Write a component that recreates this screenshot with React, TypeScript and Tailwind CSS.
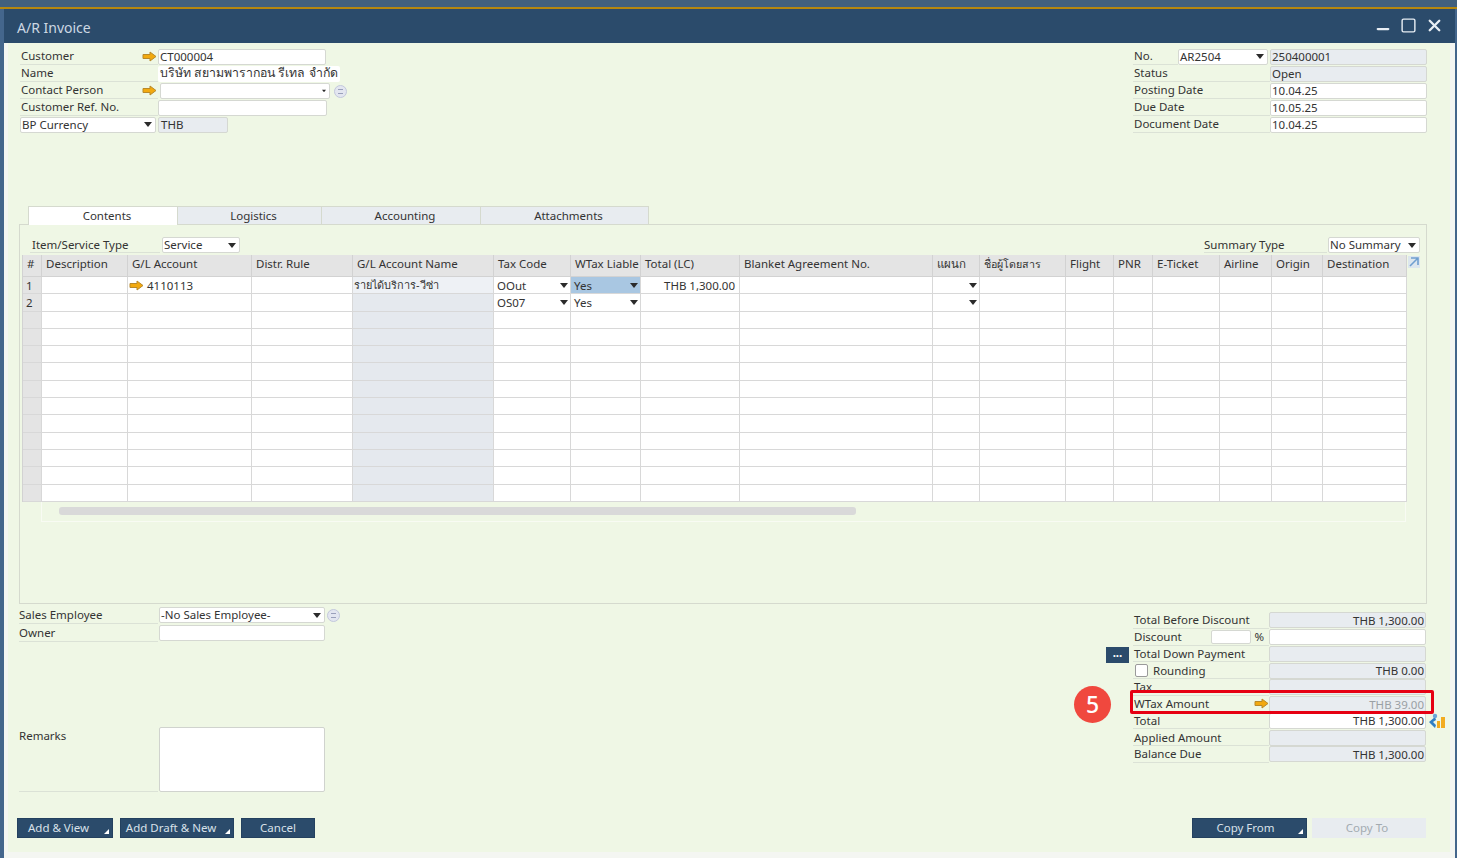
import { Minus, Square, X } from "lucide-react";
import { ReactNode } from "react";

const Arrow = () => (
  <svg width="15" height="11" viewBox="0 0 15 11" className="shrink-0">
    <path
      d="M1 3.5h7V1l6 4.5L8 10V7.5H1z"
      fill="#f2a90f"
      stroke="#b8892a"
      strokeWidth="1"
    />
  </svg>
);

const Caret = ({ small = false }: { small?: boolean }) => (
  <svg
    width={small ? 4 : 8}
    height={small ? 4 : 5}
    viewBox="0 0 8 5"
    className="shrink-0"
  >
    <path d="M0 0h8L4 5z" fill="#2b2b2b" />
  </svg>
);

const InfoDot = ({ className = "" }: { className?: string }) => (
  <span
    className={`flex h-[13px] w-[13px] items-center justify-center rounded-full border border-[#c3c8dc] bg-[#e3e6f0] ${className}`}
  >
    <span className="h-[5px] w-[5px] border-y border-[#9aa0bb]" />
  </span>
);

const Input = ({
  className = "",
  children,
}: {
  className?: string;
  children?: ReactNode;
}) => (
  <div
    className={`flex h-[16px] items-center overflow-hidden whitespace-nowrap rounded-[2px] border border-[#d5d8d2] px-[1px] ${className}`}
  >
    {children}
  </div>
);

const Select = ({
  text,
  className = "",
  small = false,
}: {
  text: string;
  className?: string;
  small?: boolean;
}) => (
  <Input className={`justify-between bg-white pr-[3px] ${className}`}>
    <span>{text}</span>
    <Caret small={small} />
  </Input>
);

const Label = ({
  text,
  className = "",
  pad = "pl-[2px]",
  children,
}: {
  text: string;
  className?: string;
  pad?: string;
  children?: ReactNode;
}) => (
  <div
    className={`flex h-full shrink-0 items-center justify-between border-b border-[#dbe2d6] ${pad} ${className}`}
  >
    <span>{text}</span>
    {children}
  </div>
);

const columns = [
  "#",
  "Description",
  "G/L Account",
  "Distr. Rule",
  "G/L Account Name",
  "Tax Code",
  "WTax Liable",
  "Total (LC)",
  "Blanket Agreement No.",
  "แผนก",
  "ชื่อผู้โดยสาร",
  "Flight",
  "PNR",
  "E-Ticket",
  "Airline",
  "Origin",
  "Destination",
];

const rowCells = (i: number): ReactNode[] => {
  const cells: ReactNode[] = columns.map(() => null);
  cells[0] = i === 0 ? "1" : i === 1 ? "2" : null;
  if (i === 0) {
    cells[2] = (
      <span className="-ml-[2px] flex items-center gap-[3px]">
        <Arrow />
        4110113
      </span>
    );
    cells[4] = <span className="-ml-[2px] text-[10.9px]">รายได้บริการ-วีซ่า</span>;
    cells[7] = <span className="ml-auto pr-[4px]">THB 1,300.00</span>;
  }
  if (i < 2) {
    cells[5] = (
      <span className="flex w-full items-center justify-between pr-[2px]">
        {i === 0 ? "OOut" : "OS07"}
        <Caret />
      </span>
    );
    cells[6] = (
      <span className="flex w-full items-center justify-between pr-[2px]">
        Yes
        <Caret />
      </span>
    );
    cells[9] = (
      <span className="flex w-full justify-end pr-[2px]">
        <Caret />
      </span>
    );
  }
  return cells;
};

const cellBg = (col: number, row: number) => {
  if (col === 0) return "bg-[#e4e4e4]";
  if (col === 4) return row === 0 ? "bg-[#eef1f5]" : "bg-[#e5e9ee]";
  if (col === 6 && row === 0) return "bg-[#a9c7e2]";
  return "bg-white";
};

const LinesGrid = () => (
  <div className="grid w-[1384px] grid-cols-[19px_86px_124px_101px_141px_77px_70px_99px_193px_47px_86px_48px_39px_67px_52px_51px_84px] border-l border-[#d2d2d2]">
    {columns.map((name) => (
      <div
        key={name}
        className={`flex h-[22px] items-center overflow-hidden whitespace-nowrap border-r border-b border-[#d2d2d2] bg-[#e4e4e4] pl-[4px] pb-[3px] ${name === "ชื่อผู้โดยสาร" ? "text-[10.7px]" : ""}`}
      >
        {name}
      </div>
    ))}
    {Array.from({ length: 13 }).map((_, r) =>
      rowCells(r).map((cell, c) => (
        <div
          key={`${r}-${c}`}
          className={`flex h-[17.3px] items-center overflow-hidden whitespace-nowrap border-r border-b border-[#d8d8d8] pl-[3px] ${cellBg(c, r)}`}
        >
          {cell}
        </div>
      )),
    )}
  </div>
);

const totals = [
  { label: "Total Before Discount", value: "THB 1,300.00" },
  { label: "Discount", value: "", white: true, pct: true },
  { label: "Total Down Payment", value: "", more: true },
  { label: "Rounding", value: "THB 0.00", check: true },
  { label: "Tax", value: "" },
  { label: "WTax Amount", value: "THB 39.00", arrow: true, muted: true },
  { label: "Total", value: "THB 1,300.00", white: true, badge: true },
  { label: "Applied Amount", value: "" },
  { label: "Balance Due", value: "THB 1,300.00" },
];

const Totals = () => (
  <div className="mt-[8px] w-[293px]">
    {totals.map((t) => (
      <div key={t.label} className="relative flex h-[16.75px] items-center">
        {t.more && (
          <div className="absolute left-[-27px] top-[1px] flex h-[16px] w-[23px] items-center justify-center bg-[#2b4b6b] pb-[4px] font-bold leading-none text-white">
            ...
          </div>
        )}
        <Label text={t.check ? "" : t.label} pad="pl-[1px]" className="w-[136px]">
          {t.check && (
            <span className="mr-auto flex items-center gap-[5px] pl-[1px]">
              <span className="h-[13px] w-[13px] rounded-[2px] border border-[#9a9a9a] bg-white" />
              {t.label}
            </span>
          )}
          {t.arrow && <Arrow />}
          {t.pct && (
            <span className="flex items-center gap-[3px] pr-[5px]">
              <span className="h-[14px] w-[40px] rounded-[2px] border border-[#d5d8d2] bg-white" />%
            </span>
          )}
        </Label>
        <Input
          className={`w-[157px] justify-end ${t.white ? "bg-white" : "bg-[#e8ecf0]"} ${t.muted ? "text-[#9aa0a4]" : ""}`}
        >
          {t.value}
        </Input>
        {t.badge && (
          <svg
            width="18"
            height="16"
            viewBox="0 0 18 16"
            className="absolute left-[295px] top-[0px]"
          >
            <path d="M1 9l6-5 1 3-3 2 3 3-1 3z" fill="#2f7fc4" />
            <circle cx="7" cy="3" r="2.2" fill="#6aa5d8" />
            <path d="M9 8h3v7H9zM13 4h4v11h-4z" fill="#f2ac1f" />
          </svg>
        )}
      </div>
    ))}
  </div>
);

const FootButton = ({
  text,
  className = "",
  corner = false,
}: {
  text: string;
  className?: string;
  corner?: boolean;
}) => (
  <div
    className={`relative flex h-[20px] items-center justify-center border border-[#24415f] bg-[#2b4b6b] text-[#d9e1e9] ${className}`}
  >
    {text}
    {corner && (
      <span className="absolute right-[3px] bottom-[3px] h-0 w-0 border-b-[5px] border-l-[5px] border-b-white border-l-transparent" />
    )}
  </div>
);

export default function App() {
  return (
    <div className="relative flex h-[858px] w-[1457px] flex-col overflow-hidden bg-[#44668c] font-['Noto_Sans','Liberation_Sans',sans-serif] text-[11.5px] text-[#333]">
      <div className="h-[7px] bg-[#41607e]" />
      <div className="h-[2px] bg-[#b5870f]" />

      <div className="ml-[4px] mr-[2px] flex flex-1 flex-col bg-[#f4f6f2]">
        <div className="flex h-[34px] items-center justify-between bg-[#2b4b6b] pl-[13px] pr-[11px] text-white">
          <span className="pt-[2px] text-[14px] text-[#cdd8e3]">A/R Invoice</span>
          <div className="flex -translate-y-[1px] items-center gap-[8px] text-[#e8eef4]">
            <Minus size={18} strokeWidth={3} className="translate-y-[4px]" />
            <Square size={17} strokeWidth={2} />
            <X size={19} strokeWidth={3} />
          </div>
        </div>

        <div className="ml-[4px] mr-[5px] mb-[6px] flex flex-1 flex-col bg-[#eff7e5]">
          {/* header fields */}
          <div className="flex h-[163px] justify-between pl-[12px] pr-[23px] pt-[5px]">
            <div>
              <div className="flex h-[17px] items-center">
                <Label text="Customer" pad="pl-[1px]" className="w-[138px] pr-[1px]">
                  <Arrow />
                </Label>
                <Input className="w-[168px] bg-white">CT000004</Input>
              </div>
              <div className="flex h-[17px] items-center">
                <Label text="Name" pad="pl-[1px]" className="w-[138px]" />
                <Input className="w-[182px] border-0 bg-white pl-[2px] text-[12.3px]">
                  บริษัท สยามพารากอน รีเทล จำกัด
                </Input>
              </div>
              <div className="flex h-[17px] items-center">
                <Label text="Contact Person" pad="pl-[1px]" className="w-[138px] pr-[1px]">
                  <Arrow />
                </Label>
                <Select text="" small className="ml-[2px] w-[170px]" />
                <InfoDot className="ml-[4px] translate-y-[1px]" />
              </div>
              <div className="flex h-[17px] items-center">
                <Label text="Customer Ref. No." pad="pl-[1px]" className="w-[138px]" />
                <Input className="w-[169px] bg-white" />
              </div>
              <div className="flex h-[17px] items-center">
                <Select text="BP Currency" className="w-[136px]" />
                <Input className="ml-[2px] w-[70px] bg-[#e8ecf0] pl-[2px]">THB</Input>
              </div>
            </div>

            <div className="w-[294px]">
              <div className="flex h-[17px] items-center">
                <Label text="No." pad="pl-[1px]" className="w-[45px]" />
                <Select text="AR2504" className="w-[90px]" />
                <Input className="ml-[2px] w-[157px] bg-[#e8ecf0]">250400001</Input>
              </div>
              {[
                { label: "Status", value: "Open", bg: "bg-[#e8ecf0]" },
                { label: "Posting Date", value: "10.04.25", bg: "bg-white" },
                { label: "Due Date", value: "10.05.25", bg: "bg-white" },
                { label: "Document Date", value: "10.04.25", bg: "bg-white" },
              ].map((f) => (
                <div key={f.label} className="flex h-[17px] items-center">
                  <Label text={f.label} pad="pl-[1px]" className="w-[137px]" />
                  <Input className={`w-[157px] ${f.bg}`}>{f.value}</Input>
                </div>
              ))}
            </div>
          </div>

          {/* tabs and contents */}
          <div className="ml-[11px] w-[1408px]">
            <div className="relative z-10 -mb-px flex h-[19px] pl-[9px]">
              <div className="flex w-[150px] items-center justify-center border-x border-t border-[#d5dace] bg-white pl-[8px]">
                Contents
              </div>
              {[
                { name: "Logistics", w: "w-[144px]" },
                { name: "Accounting", w: "w-[159px]" },
                { name: "Attachments", w: "w-[168px]" },
              ].map((t) => (
                <div
                  key={t.name}
                  className={`flex items-center justify-center border-r border-t border-b border-[#d5dace] bg-[#e8ecf0] pl-[8px] ${t.w}`}
                >
                  {t.name}
                </div>
              ))}
            </div>
            <div className="h-[380px] border border-[#d5dace] pl-[2px] pt-[12px]">
              <div className="flex h-[16px] items-center justify-between pr-[6px]">
                <div className="flex h-full items-center">
                  <Label text="Item/Service Type" className="ml-[8px] w-[130px]" pad="pl-[2px]" />
                  <Select text="Service" className="ml-[2px] w-[78px]" />
                </div>
                <div className="flex h-full items-center">
                  <Label text="Summary Type" pad="pl-0" className="w-[123px]" />
                  <Select text="No Summary" className="ml-[1px] w-[92px]" />
                </div>
              </div>
              <div className="relative mt-[2px]">
                <LinesGrid />
                <svg
                  width="12"
                  height="12"
                  viewBox="0 0 12 12"
                  className="absolute left-[1386px] top-[1px]"
                >
                  <path d="M0 0h12v12H0z" fill="#dce6ee" />
                  <path d="M3 2h7v7M10 2L2 10" fill="none" stroke="#6f9fd0" strokeWidth="1.6" />
                </svg>
              </div>
              <div className="ml-[19px] h-[20px] w-[1365px] border-b border-x border-[#f8fbf3] pl-[17px] pt-[5px]">
                <div className="h-[8px] w-[797px] rounded-[3px] bg-[#d9d9d9]" />
              </div>
            </div>
          </div>

          {/* bottom fields */}
          <div className="flex h-[214px] justify-between pl-[11px] pr-[24px]">
            <div className="pt-[2px]">
              <div className="flex h-[18px] items-center">
                <Label text="Sales Employee" pad="pl-0" className="w-[139px]" />
                <Select text="-No Sales Employee-" className="ml-[1px] w-[166px]" />
                <InfoDot className="ml-[2px]" />
              </div>
              <div className="flex h-[18px] items-center">
                <Label text="Owner" pad="pl-0" className="w-[139px]" />
                <Input className="ml-[1px] w-[166px] bg-white" />
              </div>
              <div className="mt-[85px] flex h-[65px] items-stretch">
                <div className="w-[139px] border-b border-[#dbe2d6]">Remarks</div>
                <div className="ml-[1px] w-[166px] rounded-[2px] border border-[#d0d3ce] bg-white" />
              </div>
            </div>
            <Totals />
          </div>

          <div className="flex justify-between pl-[9px] pr-[24px]">
            <div className="flex gap-[7px]">
              <FootButton text="Add & View" corner className="w-[96px] pr-[13px]" />
              <FootButton text="Add Draft & New" corner className="w-[114px] pr-[12px]" />
              <FootButton text="Cancel" className="w-[74px]" />
            </div>
            <div className="flex gap-[5px]">
              <FootButton text="Copy From" corner className="w-[115px] pr-[8px]" />
              <div className="flex h-[20px] w-[114px] items-center justify-center bg-[#e8ecf0] pr-[4px] text-[#a3abb1]">
                Copy To
              </div>
            </div>
          </div>
        </div>
      </div>

      {/* callout */}
      <div className="absolute left-[1130px] top-[690px] h-[24px] w-[304px] rounded-[2px] border-[3px] border-[#e60012]" />
      <div className="absolute left-[1074px] top-[686px] flex h-[37px] w-[37px] items-center justify-center rounded-full bg-[#f0483e] text-[23px] font-medium text-white">
        5
      </div>
    </div>
  );
}
